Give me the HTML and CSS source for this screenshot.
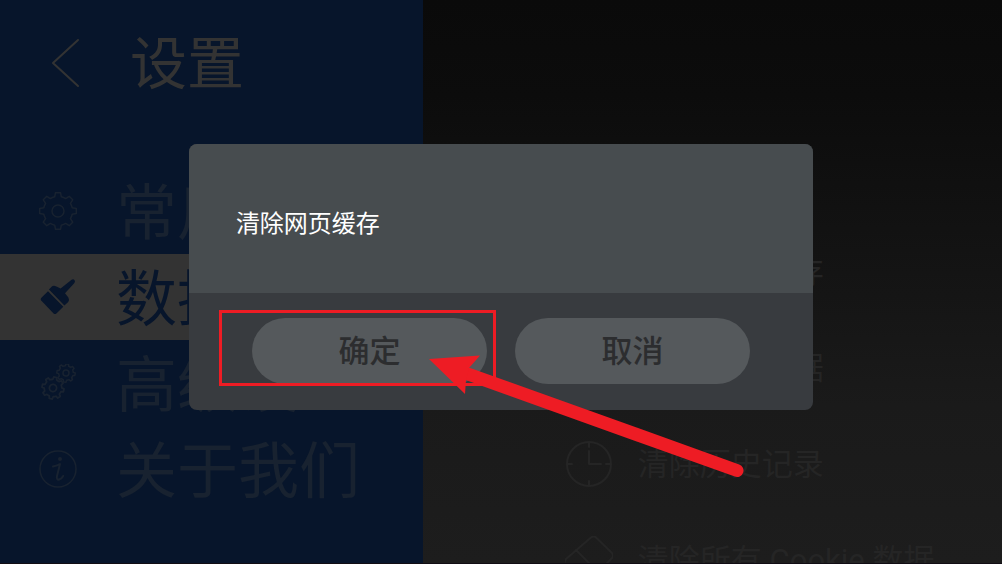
FILE: index.html
```html
<!DOCTYPE html>
<html lang="zh-CN">
<head>
    <meta charset="UTF-8">
    <meta name="viewport" content="width=device-width, initial-scale=1">
    <title>设置</title>
    <link rel="stylesheet" href="styles.css">
</head>
<body>
<svg class="defs" aria-hidden="true">
    <symbol id="gear" viewBox="-20 -20 40 40" overflow="visible">
        <path d="M-2.5-18.3H2.5L3.3-14.2Q5.8-13.6 7.7-12.4L11.2-14.7 14.7-11.2 12.4-7.7Q13.6-5.8 14.2-3.3L18.3-2.5V2.5L14.2 3.3Q13.6 5.8 12.4 7.7L14.7 11.2 11.2 14.7 7.7 12.4Q5.8 13.6 3.3 14.2L2.5 18.3H-2.5L-3.3 14.2Q-5.8 13.6-7.7 12.4L-11.2 14.7-14.7 11.2-12.4 7.7Q-13.6 5.8-14.2 3.3L-18.3 2.5V-2.5L-14.2-3.3Q-13.6-5.8-12.4-7.7L-14.7-11.2-11.2-14.7-7.7-12.4Q-5.8-13.6-3.3-14.2Z"/>
        <circle r="6"/>
    </symbol>
</svg>
<div class="page">
    <div class="side">
        <header class="head">
            <button class="back" type="button" aria-label="返回">
                <svg width="30" height="50" viewBox="0 0 30 50"><path d="M28 2L3 25l25 23"/></svg>
            </button>
            <h1>设置</h1>
        </header>
        <nav class="menu">
            <a href="#general">
                <svg class="icon" viewBox="0 0 38 38"><use href="#gear" x="-1" y="-1" width="40" height="40"/></svg>
                <span>常用设置</span>
            </a>
            <a href="#data" class="on">
                <svg class="icon fill" viewBox="1 0 38 38">
                    <path d="M10 13.3L25.3 28.7 18.4 35.4Q17 36.6 15.6 35.4L3.2 22.6Q2 21.2 3.2 20Z"/>
                    <path d="M11.7 12.3L10.9 11.4 13.6 8.8Q15.6 7 18.4 8.6L22.6 10.6 33.6 1.8Q35.4.6 36.6 2.2 37.6 3.6 36.2 5.2L27 15.2 30.4 19.4Q31.6 21.6 30.2 24L26.4 27.6Z"/>
                </svg>
                <span>数据清理</span>
            </a>
            <a href="#advanced">
                <svg class="icon thin" viewBox="0 0 38 38">
                    <g transform="rotate(12 14 24)"><use href="#gear" x="2" y="12" width="24" height="24"/></g>
                    <g transform="rotate(8 27 9)"><use href="#gear" x="17" y="-1" width="20" height="20"/></g>
                </svg>
                <span>高级设置</span>
            </a>
            <a href="#about">
                <svg class="icon" viewBox="0 0 38 38">
                    <circle cx="19" cy="19" r="18"/>
                    <circle class="dot" cx="21" cy="9" r="2"/>
                    <path class="bold" d="M14 16.500c3-.5 5-1 7-2.500L18 26c-.6 3 .6 4 2.200 3.500 1.800-.5 3-1.500 4-3.500"/>
                </svg>
                <span>关于我们</span>
            </a>
        </nav>
    </div>
    <main class="content">
        <ul class="list">
            <li><button type="button">
                <svg viewBox="0 0 48 48"><rect x="3" y="6" width="42" height="36" rx="3"/><path d="M3 15h42"/></svg>
                <span>清除网页缓存</span>
            </button></li>
            <li><button type="button">
                <svg viewBox="0 0 48 48"><rect x="6" y="3" width="36" height="42" rx="3"/><path d="M14 16h20M14 25h20"/></svg>
                <span>清除表单数据</span>
            </button></li>
            <li><button type="button">
                <svg viewBox="0 0 48 48"><circle cx="24" cy="24" r="22"/><path d="M24 2v5M24 41v5M2 24h5M41 24h5M24 11v13h12"/></svg>
                <span>清除历史记录</span>
            </button></li>
            <li><button type="button">
                <svg viewBox="0 0 48 48"><path d="M1 23L26 1.500q3-2 5 0L47 17q2 3 0 5L24 46H14L1 33q-3-5 0-10zM11 14l22 22"/></svg>
                <span>清除所有 Cookie 数据</span>
            </button></li>
        </ul>
    </main>
</div>
<div class="mask">
    <div class="dialog" role="dialog" aria-modal="true" aria-labelledby="msg">
        <p class="msg" id="msg">清除网页缓存</p>
        <div class="btns">
            <button type="button">确定</button>
            <button type="button">取消</button>
        </div>
        <!-- red box and arrow on top of the confirm button -->
        <svg class="mark" width="625" height="266" viewBox="0 0 625 266" aria-hidden="true">
            <rect x="31.500" y="167.500" width="274" height="73"/>
            <path class="line" d="M279 230L548 326.500"/>
            <path class="tip" d="M240 215L291 211.500 280 224 277 236 276 250z"/>
        </svg>
    </div>
</div>
</body>
</html>
```
FILE: styles.css
```css
*{ margin:0; padding:0; box-sizing:border-box;}
body{
    font-family: Roboto, "Noto Sans CJK SC", sans-serif;
    background:#0b0b0b;
    overflow: hidden;
}
button{
    border: 0;
    background: none;
    font-family: inherit;
    cursor: pointer;
}
svg{
    fill: none;
    stroke: currentColor;
    stroke-linecap: round;
    stroke-linejoin: round;
}
.defs{
    position: absolute;
    width: 0;
    height: 0;
}
.page{
    display: flex;
    height: 100vh;
    overflow: hidden;
    border-bottom: 1px solid #110d14;
}
.side{
    flex: 0 0 42.2%;
    background:#07152b;
}
.head{
    display: flex;
    align-items: center;
    gap: 50px;
    height: 126px;
    padding-left: 50px;
    color:#333;
}
.back{
    display: flex;
    color: inherit;
}
.back svg{ stroke-width:2;}
.head h1{
    padding-top: 4px;
    font-size: 57px;
    font-weight: 400;
    line-height: 80px;
}
.menu{ padding-top:42px;}
.menu a{
    display: flex;
    align-items: center;
    gap: 39px;
    height: 86px;
    padding-left: 39px;
    font-size: 61px;
    line-height: 78px;
    white-space: nowrap;
    text-decoration: none;
    color:#182230;
}
.menu span{ padding-top:6px;}
.menu a.on{
    background:#333;
    color:#07152b;
}
.icon{
    flex: none;
    width: 38px;
    height: 38px;
    stroke-width: 1.5;
}
.icon.fill{
    fill: currentColor;
    stroke: none;
}
.icon.thin{ stroke-width:3;}
.icon .bold{ stroke-width:2;}
.icon .dot{
    fill: currentColor;
    stroke: none;
}
.content{
    flex: 1;
    min-width: 0;
    padding: 224px 0 0 142px;
    background: linear-gradient(#0a0a0a, #0c0c0c 17%, #1a1a1a 72%, #1d1d1d);
}
.list{ list-style:none;}
.list button{
    display: flex;
    align-items: center;
    gap: 25px;
    height: 96px;
    font-size: 31px;
    line-height: 48px;
    white-space: nowrap;
    color:#252525;
}
.list span{ padding-top:2px;}
.list svg{
    width: 48px;
    height: 48px;
    stroke-width: 2;
}
.mask{
    position: fixed;
    inset: 0;
    display: flex;
    align-items: center;
    justify-content: center;
    padding-bottom: 10px;
}
.dialog{
    position: relative;
    width: 62.3%;
    border-radius: 8px;
    background:#383b3f;
}
.msg{
    padding: 62px 47px 51px;
    border-radius: 8px 8px 0 0;
    background:#474c4f;
    font-size: 24px;
    line-height: 36px;
    color:#fff;
}
.btns{
    display: flex;
    justify-content: center;
    gap: 28px;
    padding: 25px 0 26px;
}
.btns button{
    width: 235px;
    height: 66px;
    padding-top: 2px;
    border-radius: 33px;
    background:#55595c;
    font-size: 31px;
    font-weight: 500;
    line-height: 48px;
    color:#2c2d2f;
}
.mark{
    position: absolute;
    left: 0;
    top: 0;
    overflow: visible;
    pointer-events: none;
    stroke: #ee1c24;
    stroke-width: 3;
    stroke-linejoin: miter;
}
.mark .line{ stroke-width:13;}
.mark .tip{
    fill: #ee1c24;
    stroke: none;
}
```
